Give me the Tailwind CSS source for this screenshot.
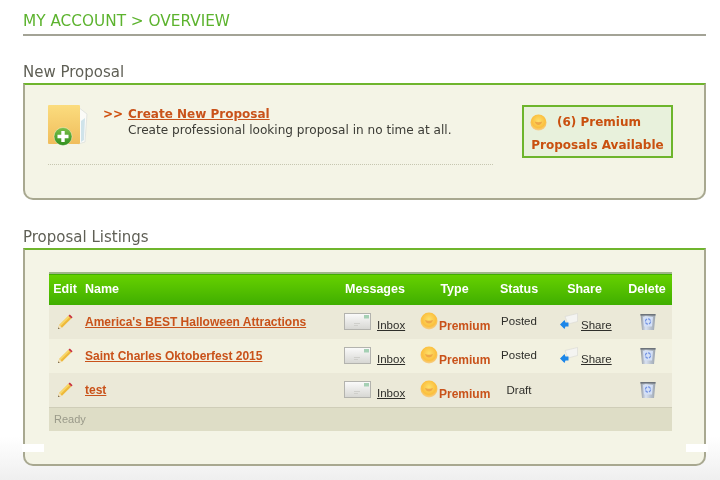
<!DOCTYPE html>
<html lang="en">
<head>
    <meta charset="UTF-8">
    <title>My Account - Overview</title>
    <script src="https://cdn.jsdelivr.net/npm/@tailwindcss/browser@4"></script>
</head>
<body class="bg-white overflow-hidden">
    <!-- Shared icons -->
    <svg width="0" height="0" class="absolute">
        <defs>
            <radialGradient id="sunFill" cx="50%" cy="40%" r="60%">
                <stop offset="0%" stop-color="#fde06a"/>
                <stop offset="70%" stop-color="#fbbf3e"/>
                <stop offset="100%" stop-color="#f6cf90"/>
            </radialGradient>
            <linearGradient id="mailFill" x1="0" y1="0" x2="0" y2="1">
                <stop offset="0%" stop-color="#fbfbfb"/>
                <stop offset="100%" stop-color="#d6d6d2"/>
            </linearGradient>
            <linearGradient id="binFill" x1="0" y1="0" x2="1" y2="0">
                <stop offset="0%" stop-color="#8f959c"/>
                <stop offset="35%" stop-color="#d9e2f2"/>
                <stop offset="100%" stop-color="#9aa3ad"/>
            </linearGradient>
            <linearGradient id="folderFill" x1="0" y1="0" x2="0" y2="1">
                <stop offset="0%" stop-color="#fbdc7e"/>
                <stop offset="100%" stop-color="#f0bd5c"/>
            </linearGradient>
            <linearGradient id="plusFill" x1="0" y1="0" x2="0" y2="1">
                <stop offset="0%" stop-color="#7cc04a"/>
                <stop offset="100%" stop-color="#2f8f1e"/>
            </linearGradient>
            <symbol id="sun" viewBox="0 0 18 18">
                <circle cx="9" cy="9" r="8.500" fill="url(#sunFill)"/>
                <path d="M5 8c2 1 6 1 8 0-.6 2.400-2.200 3.600-4 3.600S5.600 10.400 5 8z" fill="#efa846"/>
            </symbol>
            <symbol id="mail" viewBox="0 0 27 17">
                <rect x=".5" y=".5" width="26" height="16" fill="url(#mailFill)" stroke="#b3b3ae"/>
                <rect x="20" y="2" width="5" height="3.500" fill="#a5d0b4"/>
                <rect x="10" y="10" width="6" height="1" fill="#cfcfcb"/>
                <rect x="10" y="12" width="4" height="1" fill="#cfcfcb"/>
            </symbol>
            <symbol id="pencil" viewBox="0 0 16 16">
                <path d="M1 15l1.200-4L11.500 1.800l2.800 2.800L5 13.800z" fill="#eeb93a"/>
                <path d="M2.200 11l9.300-9.200 1.300 1.300L3.500 12.300z" fill="#f8d768"/>
                <path d="M11.500 1.800l1.300-1.300 2.800 2.800-1.300 1.300z" fill="#c8323c"/>
                <path d="M1 15l1.200-4L5 13.800z" fill="#f2e3c4"/>
                <path d="M1 15l.5-1.600 1.100 1.100z" fill="#4a4032"/>
            </symbol>
            <symbol id="sendMail" viewBox="0 0 18 18">
                <path d="M5 3.500L17.500 .5v8L8 11z" fill="#f4f4f1" stroke="#d8d8d3" stroke-width=".6"/>
                <path d="M0 11.500L4.500 7l1 2.500h3v4h-3l-1 2.500z" fill="#1c86e8"/>
            </symbol>
            <symbol id="bin" viewBox="0 0 16 18">
                <path d="M.5 1h15l-1.500 16H2z" fill="url(#binFill)"/>
                <path d="M3 4h10l-1 9.500H4z" fill="#d4e0f6"/>
                <circle cx="8" cy="8.500" r="2.600" fill="none" stroke="#6f8fe0" stroke-width="1.200" stroke-dasharray="3 1"/>
                <rect x=".5" y="1" width="15" height="1.600" fill="#6d737a"/>
            </symbol>
        </defs>
    </svg>

    <div class="relative w-[720px] h-[480px] bg-linear-to-b from-white from-[91%] to-[#efefef] pl-[23px] pr-[14px] pt-[12px] blur-[0.4px] font-['DejaVu_Sans',sans-serif]">
        <!-- Page title -->
        <h1 class="h-[24px] border-b-2 border-[#a3a396] text-[15.3px] leading-[19px] text-[#5cb32e]">MY ACCOUNT &gt; OVERVIEW</h1>

        <!-- New proposal -->
        <h2 class="mt-[27px] h-[20px] text-[15px] leading-[18px] text-[#5f5f55]">New Proposal</h2>
        <section class="h-[117px] rounded-b-[10px] border-x-2 border-b-2 border-t-2 border-x-[#a8a890] border-b-[#a8a890] border-t-[#6fb52d] bg-[#f4f4e6] pl-[23px] pt-[20px] flex">
            <div class="w-[445px] h-[60px] border-b border-dotted border-[#c6c6b0] flex">
                <svg class="w-[40px] h-[42px] shrink-0" viewBox="0 0 40 42">
                    <path d="M30 2l9 7-2 28-7 2z" fill="#fbfbf8" stroke="#e2e5e0"/>
                    <path d="M33 16l4-3-1 22-3 2z" fill="#cfe3ea"/>
                    <rect x="0" y="0" width="32" height="39" rx="1" fill="url(#folderFill)"/>
                    <circle cx="15" cy="31.500" r="9" fill="url(#plusFill)" stroke="#fff" stroke-opacity=".35"/>
                    <path d="M13.300 26h3.400v3.800h3.800v3.400h-3.800V37h-3.400v-3.800H9.500v-3.400h3.800z" fill="#fff"/>
                </svg>
                <div class="ml-[15px] mt-[1px] flex">
                    <span class="w-[25px] text-[12px] font-bold leading-[16px] text-[#cf4f0e]">&gt;&gt;</span>
                    <div>
                        <a class="block text-[12px] font-bold leading-[16px] text-[#c9521a] underline">Create New Proposal</a>
                        <p class="text-[12.1px] leading-[16px] text-[#3c3c36]">Create professional looking proposal in no time at all.</p>
                    </div>
                </div>
            </div>
            <div class="ml-[29px] w-[151px] h-[53px] border-2 border-[#6db52c] bg-[#e8f1dc] text-[12px] font-bold text-[#c9500f] flex flex-col pt-[3px]">
                <div class="flex items-center h-[24px] pl-[6px]">
                    <svg class="w-[17px] h-[17px]"><use href="#sun"/></svg>
                    <span class="ml-[10px]">(6) Premium</span>
                </div>
                <div class="text-center leading-[22px]">Proposals Available</div>
            </div>
        </section>

        <!-- Proposal listings -->
        <h2 class="mt-[27px] h-[21px] text-[15px] leading-[20px] text-[#5f5f55]">Proposal Listings</h2>
        <section class="h-[218px] rounded-b-[10px] border-x-2 border-b-2 border-t-2 border-x-[#a8a890] border-b-[#a8a890] border-t-[#6fb52d] bg-[#f4f4e6] pl-[24px] pt-[22px]">
            <table class="w-[623px] table-fixed border-collapse font-['Liberation_Sans',sans-serif] text-[11.5px] text-[#2e2e2a]">
                <colgroup>
                    <col class="w-[32px]">
                    <col class="w-[259px]">
                    <col class="w-[70px]">
                    <col class="w-[84px]">
                    <col class="w-[50px]">
                    <col class="w-[78px]">
                    <col class="w-[50px]">
                </colgroup>
                <thead>
                    <tr class="h-[32px] border-t-2 border-[#9fb58a] bg-linear-to-b from-[#66d100] to-[#3fae00] text-[12.5px] font-bold text-white">
                        <th class="text-center font-bold">Edit</th>
                        <th class="pl-[4px] text-left font-bold">Name</th>
                        <th class="text-center font-bold">Messages</th>
                        <th class="pl-[5px] text-center font-bold">Type</th>
                        <th class="text-center font-bold">Status</th>
                        <th class="pl-[3px] text-center font-bold">Share</th>
                        <th class="text-center font-bold">Delete</th>
                    </tr>
                </thead>
                <tbody>
                    <tr class="h-[34px] bg-[#ebe9d8]">
                        <td><div class="h-[34px] pt-[9px] pl-[8px]"><svg class="w-[16px] h-[16px]"><use href="#pencil"/></svg></div></td>
                        <td class="pl-[4px]"><a class="text-[12px] font-bold text-[#c9521a] underline">America's BEST Halloween Attractions</a></td>
                        <td><div class="flex h-[34px] pl-[4px]"><svg class="w-[27px] h-[17px] mt-[8px] shrink-0"><use href="#mail"/></svg><a class="ml-[6px] mt-[12px] underline">Inbox</a></div></td>
                        <td><div class="flex h-[34px] pl-[10px]"><svg class="w-[18px] h-[18px] mt-[7px] shrink-0"><use href="#sun"/></svg><span class="ml-[1px] mt-[12px] text-[12px] font-bold text-[#c9521a]">Premium</span></div></td>
                        <td class="text-center">Posted</td>
                        <td><div class="flex h-[34px] pl-[16px]"><svg class="w-[18px] h-[18px] mt-[8px] shrink-0"><use href="#sendMail"/></svg><a class="ml-[3px] mt-[12px] underline">Share</a></div></td>
                        <td><div class="h-[34px] pt-[8px] pl-[18px]"><svg class="w-[16px] h-[18px]"><use href="#bin"/></svg></div></td>
                    </tr>
                    <tr class="h-[34px] bg-[#f2f1e0]">
                        <td><div class="h-[34px] pt-[9px] pl-[8px]"><svg class="w-[16px] h-[16px]"><use href="#pencil"/></svg></div></td>
                        <td class="pl-[4px]"><a class="text-[12px] font-bold text-[#c9521a] underline">Saint Charles Oktoberfest 2015</a></td>
                        <td><div class="flex h-[34px] pl-[4px]"><svg class="w-[27px] h-[17px] mt-[8px] shrink-0"><use href="#mail"/></svg><a class="ml-[6px] mt-[12px] underline">Inbox</a></div></td>
                        <td><div class="flex h-[34px] pl-[10px]"><svg class="w-[18px] h-[18px] mt-[7px] shrink-0"><use href="#sun"/></svg><span class="ml-[1px] mt-[12px] text-[12px] font-bold text-[#c9521a]">Premium</span></div></td>
                        <td class="text-center">Posted</td>
                        <td><div class="flex h-[34px] pl-[16px]"><svg class="w-[18px] h-[18px] mt-[8px] shrink-0"><use href="#sendMail"/></svg><a class="ml-[3px] mt-[12px] underline">Share</a></div></td>
                        <td><div class="h-[34px] pt-[8px] pl-[18px]"><svg class="w-[16px] h-[18px]"><use href="#bin"/></svg></div></td>
                    </tr>
                    <tr class="h-[34px] bg-[#ebe9d8]">
                        <td><div class="h-[34px] pt-[9px] pl-[8px]"><svg class="w-[16px] h-[16px]"><use href="#pencil"/></svg></div></td>
                        <td class="pl-[4px]"><a class="text-[12px] font-bold text-[#c9521a] underline">test</a></td>
                        <td><div class="flex h-[34px] pl-[4px]"><svg class="w-[27px] h-[17px] mt-[8px] shrink-0"><use href="#mail"/></svg><a class="ml-[6px] mt-[12px] underline">Inbox</a></div></td>
                        <td><div class="flex h-[34px] pl-[10px]"><svg class="w-[18px] h-[18px] mt-[7px] shrink-0"><use href="#sun"/></svg><span class="ml-[1px] mt-[12px] text-[12px] font-bold text-[#c9521a]">Premium</span></div></td>
                        <td class="pt-[2px] text-center">Draft</td>
                        <td></td>
                        <td><div class="h-[34px] pt-[8px] pl-[18px]"><svg class="w-[16px] h-[18px]"><use href="#bin"/></svg></div></td>
                    </tr>
                </tbody>
                <tfoot>
                    <tr class="h-[23px] border-t border-[#cfcdb8] bg-[#deddc6]">
                        <td colspan="7" class="pl-[5px] text-[11px] text-[#9a9a8a]">Ready</td>
                    </tr>
                </tfoot>
            </table>
        </section>

        <!-- White gaps where the box edge is cut -->
        <div class="absolute left-[22px] top-[444px] w-[22px] h-[8px] bg-white"></div>
        <div class="absolute left-[686px] top-[444px] w-[22px] h-[8px] bg-white"></div>
    </div>
</body>
</html>
